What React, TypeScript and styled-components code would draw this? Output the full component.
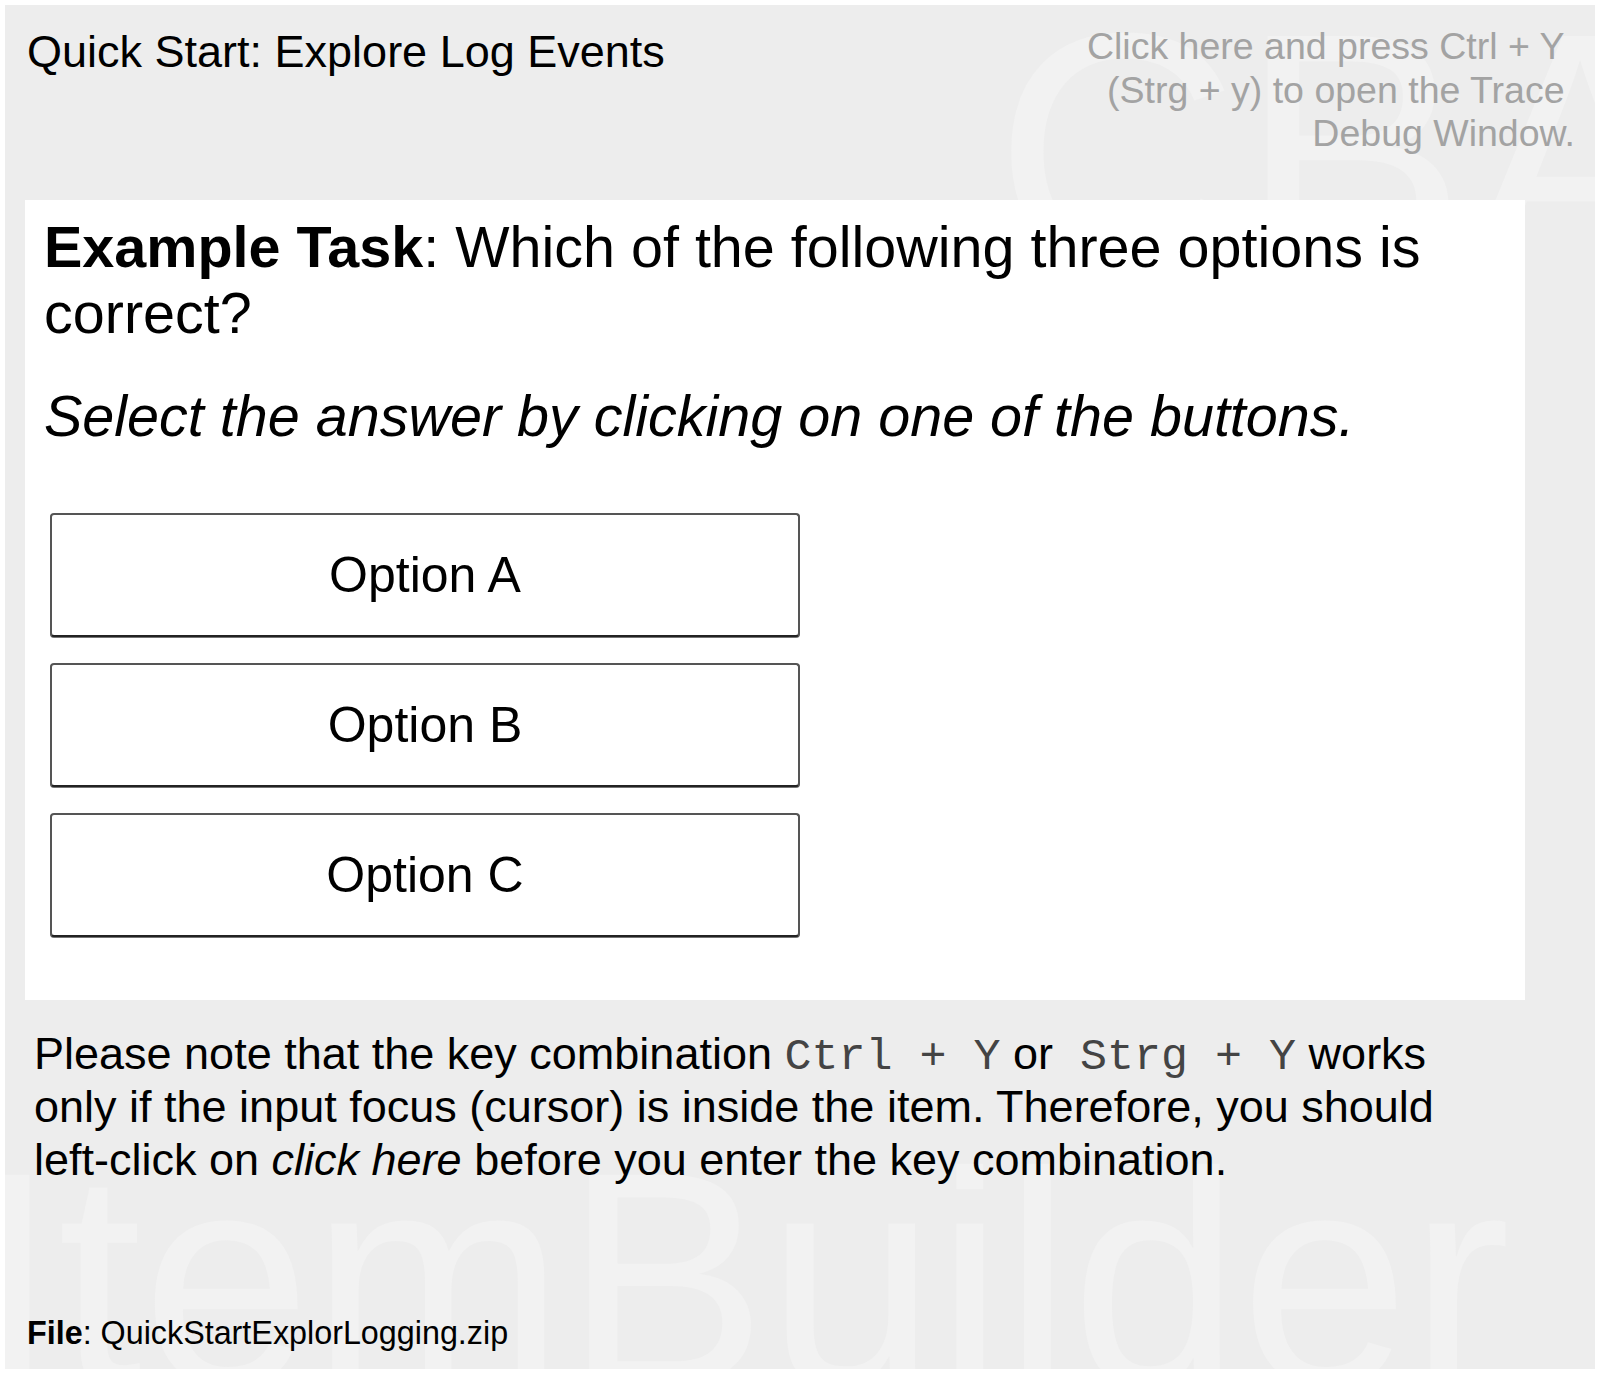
import React from "react";
import styled, { createGlobalStyle } from "styled-components";

const GlobalStyle = createGlobalStyle`
  html, body {
    margin: 0;
    padding: 0;
    background: #ffffff;
  }
  body {
    margin: 5px;
    font-family: "Liberation Sans", Arial, sans-serif;
    color: #000;
  }
`;

const Panel = styled.main`
  position: relative;
  overflow: hidden;
  box-sizing: border-box;
  height: 1364px;
  background: #ededed;
  padding: 20px;
  display: flex;
  flex-direction: column;
`;

const Watermark = styled.span<{ $top: number; $left: number; $size: number }>`
  position: absolute;
  top: ${(p) => p.$top}px;
  left: ${(p) => p.$left}px;
  font-size: ${(p) => p.$size}px;
  line-height: 1;
  color: #f2f2f2;
  white-space: nowrap;
  pointer-events: none;
  user-select: none;
  z-index: 0;
`;

const Header = styled.header`
  position: relative;
  z-index: 1;
  display: flex;
  justify-content: space-between;
  align-items: flex-start;
  height: 175px;
`;

const Title = styled.h1`
  margin: 1px 0 0 2px;
  font-size: 45px;
  font-weight: normal;
  line-height: normal;
`;

const Hint = styled.div`
  color: #a3a3a3;
  font-size: 37.5px;
  line-height: 43.5px;
  text-align: right;
  cursor: pointer;
`;

const Card = styled.section`
  position: relative;
  z-index: 1;
  box-sizing: border-box;
  width: 1500px;
  height: 800px;
  background: #ffffff;
  padding: 14px 16px 14px 19px;
`;

const TaskHeading = styled.p`
  margin: 0;
  font-size: 57.5px;
  line-height: 66px;
`;

const Instruction = styled.p`
  margin: 37px 0 0 0;
  font-size: 57.5px;
  line-height: 66px;
  font-style: italic;
`;

const Options = styled.div`
  display: flex;
  flex-direction: column;
  gap: 26px;
  margin: 64px 0 0 6px;
`;

const OptionButton = styled.button`
  box-sizing: border-box;
  width: 750px;
  height: 124px;
  display: flex;
  align-items: center;
  justify-content: center;
  background: #ffffff;
  border: 2px solid #555555;
  border-bottom-color: #222222;
  border-radius: 4px;
  box-shadow: 0 1px 0 rgba(0, 0, 0, 0.55);
  font-family: "Liberation Sans", Arial, sans-serif;
  font-size: 50px;
  color: #000;
  padding: 0;
  cursor: pointer;
`;

const Note = styled.p`
  position: relative;
  z-index: 1;
  margin: 27px 0 0 0;
  padding-left: 9px;
  max-width: 1450px;
  font-size: 45px;
  line-height: 53px;
`;

const Code = styled.code`
  font-family: "Liberation Mono", "Courier New", monospace;
  font-size: 45px;
  line-height: 0;
  color: #444444;
`;

const FileLine = styled.footer`
  position: relative;
  z-index: 1;
  margin: auto 0 -3px 2px;
  font-size: 32.3px;
  line-height: normal;
`;

const options = ["Option A", "Option B", "Option C"];

export default function App() {
  return (
    <>
      <GlobalStyle />
      <Panel>
        <Watermark $top={-23} $left={989} $size={340}>
          CBA
        </Watermark>
        <Watermark $top={1122} $left={-32} $size={304}>
          ItemBuilder
        </Watermark>
        <Header>
          <Title>Quick Start: Explore Log Events</Title>
          <Hint>
            Click here and press Ctrl + Y&nbsp;
            <br />
            (Strg + y) to open the Trace&nbsp;
            <br />
            Debug Window.
          </Hint>
        </Header>
        <Card>
          <TaskHeading>
            <strong>Example Task</strong>: Which of the following three options is
            correct?
          </TaskHeading>
          <Instruction>Select the answer by clicking on one of the buttons.</Instruction>
          <Options>
            {options.map((o) => (
              <OptionButton key={o} type="button">
                {o}
              </OptionButton>
            ))}
          </Options>
        </Card>
        <Note>
          Please note that the key combination <Code>Ctrl + Y</Code> or
          <Code>{"\u00a0"}Strg + Y</Code> works only if the input focus (cursor) is
          inside the item. Therefore, you should left-click on <em>click here</em>{" "}
          before you enter the key combination.
        </Note>
        <FileLine>
          <strong>File</strong>: QuickStartExplorLogging.zip
        </FileLine>
      </Panel>
    </>
  );
}
